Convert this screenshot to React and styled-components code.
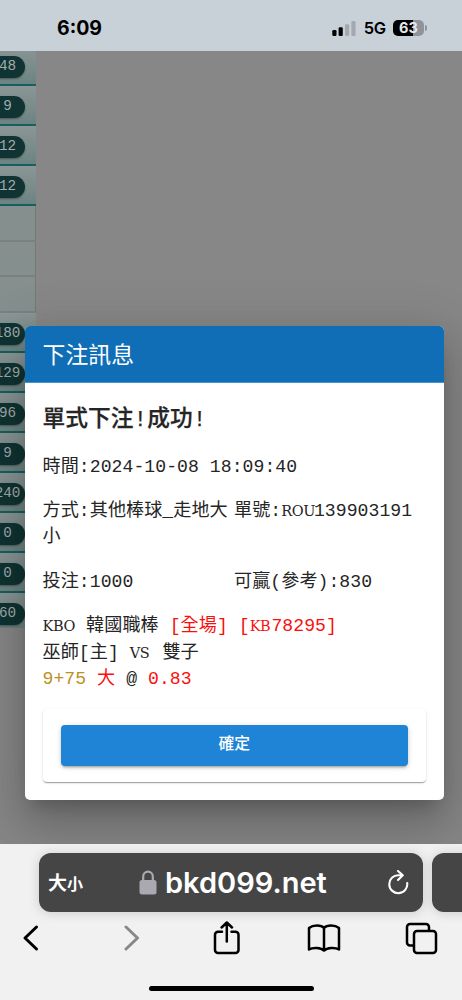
import styled, { createGlobalStyle } from "styled-components";

const GlobalStyle = createGlobalStyle`
  * {
    box-sizing: border-box;
  }
  body {
    margin: 0;
    background: #f1f1f1;
  }
`;

const mono = `"Liberation Mono", "Noto Sans CJK TC", monospace`;
const sans = `Inter, "Noto Sans CJK TC", sans-serif`;

const Phone = styled.div`
  display: flex;
  flex-direction: column;
  width: 462px;
  height: 1000px;
  overflow: hidden;
  font-family: ${mono};
`;

const StatusBar = styled.header`
  display: flex;
  align-items: center;
  justify-content: space-between;
  flex: none;
  height: 51px;
  padding: 5px 35px 0 57px;
  background: #c8d0d8;
  font-family: ${sans};
`;

const Clock = styled.span`
  font-size: 19.5px;
  font-weight: 700;
  line-height: 23px;
`;

const Indicators = styled.div`
  display: flex;
  align-items: center;
`;

const Network = styled.span`
  margin: 0 7px 0 8px;
  font-size: 16.5px;
  font-weight: 600;
  line-height: 20px;
  letter-spacing: -0.2px;
`;

const Battery = styled.div`
  width: 31px;
  height: 16px;
  border-radius: 5px;
  background: linear-gradient(90deg, #000 63%, #8f949b 63%);
  color: #e4e9ee;
  font-size: 14.5px;
  font-weight: 700;
  line-height: 16.5px;
  text-align: center;
`;

const BatteryTip = styled.span`
  width: 2px;
  height: 6px;
  margin-left: 1px;
  border-radius: 0 2px 2px 0;
  background: #8f949b;
`;

const Page = styled.main`
  position: relative;
  flex: none;
  height: 793px;
  overflow: hidden;
  background: #878787;
`;

const Sidebar = styled.div`
  width: 36px;
  margin-top: -5px;
  overflow: hidden;
`;

const MenuRow = styled.div`
  height: ${(props) => (props.$last ? 35 : 40)}px;
  padding-top: 10px;
  border-bottom: ${(props) => (props.$last ? 0 : 2)}px solid #15605f;
  background: linear-gradient(#8b9695, #6c8482);
`;

const Count = styled.div`
  width: 35px;
  height: 22px;
  margin-left: -10px;
  border-radius: 11px;
  background: #0f3433;
  box-shadow: 0 1px 2px rgba(0, 0, 0, 0.35);
  color: #a3abab;
  font-size: 14.3px;
  line-height: 20px;
  text-align: center;
`;

const EmptyCell = styled.div`
  width: 35.5px;
  height: ${(props) => props.$height}px;
  border-right: 1px solid #757a79;
  border-bottom: 2px solid #7b8180;
  background: #85908e;
`;

const Backdrop = styled.div`
  position: absolute;
  inset: 0;
  padding: 275px 18px 44px 24.5px;
`;

const Dialog = styled.section`
  display: flex;
  flex-direction: column;
  height: 474px;
  overflow: hidden;
  border-radius: 5px;
  background: #fff;
  color: #252525;
  box-shadow:
    0 12px 17px -8px rgba(0, 0, 0, 0.2),
    0 27px 43px 3px rgba(0, 0, 0, 0.14),
    0 10px 52px 9px rgba(0, 0, 0, 0.12);
`;

const DialogTitle = styled.h2`
  flex: none;
  height: 56.5px;
  margin: 0;
  padding: 3px 0 0 18px;
  border-bottom: 1px solid #4a92cb;
  background: #106eb7;
  color: #fff;
  font-size: 22.9px;
  font-weight: 400;
  line-height: 57px;
`;

const DialogBody = styled.div`
  display: flex;
  flex-direction: column;
  padding: 20px 18px 18px;
  font-size: 18.1px;
  line-height: 26.2px;
  letter-spacing: 0.06px;
`;

const Result = styled.h3`
  margin: 0 0 17px;
  font-size: 22.7px;
  font-weight: 500;
  line-height: 34px;
  -webkit-text-stroke: 0.25px currentColor;
`;

const Details = styled.div`
  display: grid;
  grid-template-columns: 191.5px 1fr;
  row-gap: 18.5px;
  white-space: nowrap;
`;

const Cell = styled.div`
  grid-column: ${(props) => (props.$wide ? "1 / -1" : "auto")};
`;

const Bet = styled.div`
  margin-top: 18px;
  white-space: nowrap;
`;

/* capital letters with slabs, set on the monospace grid */
const Caps = styled.span`
  display: inline-block;
  width: ${(props) => props.children.length * 10.9}px;
  font-family: "DejaVu Serif", serif;
  font-size: 14.5px;
  line-height: 1;
  letter-spacing: -0.4px;
`;

const Red = styled.span`
  color: #fa0f0c;
`;

const Gold = styled.span`
  color: #bd901c;
`;

const Actions = styled.div`
  margin-top: 17px;
  height: 73px;
  padding: 16px 18px;
  border-radius: 4px;
  box-shadow:
    0 2px 1px -1px rgba(0, 0, 0, 0.2),
    0 1px 1px rgba(0, 0, 0, 0.14),
    0 1px 3px rgba(0, 0, 0, 0.12);
`;

const ConfirmButton = styled.button`
  width: 100%;
  height: 41px;
  padding: 0 0 5px;
  border: 0;
  border-radius: 4px;
  background: #2084d6;
  color: #fff;
  font-family: "Noto Sans CJK TC", sans-serif;
  font-size: 15.8px;
  font-weight: 500;
  box-shadow:
    0 3px 2px -2px rgba(0, 0, 0, 0.2),
    0 2px 3px rgba(0, 0, 0, 0.14),
    0 1px 6px rgba(0, 0, 0, 0.12);
`;

const Browser = styled.footer`
  display: flex;
  flex-direction: column;
  flex: 1;
  padding-top: 9px;
  background: #f1f1f1;
  font-family: ${sans};
`;

const Tabs = styled.div`
  display: flex;
  gap: 9px;
  padding-left: 39px;
`;

const AddressBar = styled.div`
  display: flex;
  align-items: center;
  flex: none;
  width: 384px;
  height: 59px;
  padding: 0 14px 0 9px;
  border-radius: 12px;
  background: #454545;
  color: #fff;
  box-shadow: 0 1px 12px rgba(0, 0, 0, 0.16);
`;

const TextSize = styled.div`
  width: 91px;
  padding-top: 2px;
  font-size: 19px;
  font-weight: 700;
  line-height: 28px;
  small {
    font-size: 16px;
  }
`;

const Url = styled.span`
  flex: 1;
  margin-left: 8px;
  padding-top: 1px;
  font-size: 29px;
  font-weight: 600;
  line-height: 36px;
`;

const Toolbar = styled.nav`
  display: flex;
  justify-content: space-between;
  align-items: center;
  height: 50px;
  margin-top: 1px;
  padding: 0 21px 0 11px;
`;

const ToolButton = styled.div`
  display: flex;
  justify-content: center;
  width: 40px;
`;

const Icon = styled.svg`
  display: block;
  flex: none;
  fill: none;
  stroke: ${(props) => props.$color || "#000"};
  stroke-width: ${(props) => props.$stroke || 2.5};
  stroke-linecap: round;
  stroke-linejoin: round;
`;

const HomeIndicator = styled.div`
  width: 165px;
  height: 5px;
  margin: 23px auto 0;
  border-radius: 3px;
  background: #000;
`;

const Signal = () => (
  <svg width="24" height="15" viewBox="0 0 24 15">
    <rect x="0.3" y="9" width="4.2" height="6" rx="1.2" />
    <rect x="6.6" y="6.3" width="4.2" height="8.7" rx="1.2" />
    <rect x="13" y="3.2" width="4.2" height="11.8" rx="1.2" fill="#a3a9b0" />
    <rect x="19.4" y="0" width="4.2" height="15" rx="1.2" fill="#a3a9b0" />
  </svg>
);

const Lock = () => (
  <svg width="18" height="25" viewBox="0 0 18 25">
    <rect x="0.5" y="10" width="17" height="14.5" rx="2.5" fill="#aaa9b1" />
    <path
      d="M4.2 11V6.5a4.8 4.8 0 0 1 9.6 0V11"
      fill="none"
      stroke="#aaa9b1"
      strokeWidth="2.2"
    />
  </svg>
);

const topCounts = [48, 9, 12, 12];
const bottomCounts = [180, 129, 96, 9, 240, 0, 0, 60];

function App() {
  return (
    <Phone>
      <GlobalStyle />
      <StatusBar>
        <Clock>6:09</Clock>
        <Indicators>
          <Signal />
          <Network>5G</Network>
          <Battery>63</Battery>
          <BatteryTip />
        </Indicators>
      </StatusBar>

      <Page>
        <Sidebar>
          {topCounts.map((count, i) => (
            <MenuRow key={i}>
              <Count>{count}</Count>
            </MenuRow>
          ))}
          <EmptyCell $height={36} />
          <EmptyCell $height={35} />
          <EmptyCell $height={36} />
          {bottomCounts.map((count, i) => (
            <MenuRow key={i} $last={i === bottomCounts.length - 1}>
              <Count>{count}</Count>
            </MenuRow>
          ))}
        </Sidebar>

        <Backdrop>
          <Dialog role="dialog">
            <DialogTitle>下注訊息</DialogTitle>
            <DialogBody>
              <Result>單式下注!成功!</Result>
              <Details>
                <Cell $wide>時間:2024-10-08 18:09:40</Cell>
                <Cell>
                  方式:其他棒球_走地大
                  <br />小
                </Cell>
                <Cell>
                  單號:<Caps>ROU</Caps>139903191
                </Cell>
                <Cell>投注:1000</Cell>
                <Cell>可贏(參考):830</Cell>
              </Details>
              <Bet>
                <div>
                  <Caps>KBO</Caps> 韓國職棒{" "}
                  <Red>
                    [全場] [<Caps>KB</Caps>78295]
                  </Red>
                </div>
                <div>
                  巫師[主] <Caps>VS</Caps> 雙子
                </div>
                <div>
                  <Gold>9+75</Gold> <Red>大</Red> @ <Red>0.83</Red>
                </div>
              </Bet>
              <Actions>
                <ConfirmButton>確定</ConfirmButton>
              </Actions>
            </DialogBody>
          </Dialog>
        </Backdrop>
      </Page>

      <Browser>
        <Tabs>
          <AddressBar>
            <TextSize>
              大<small>小</small>
            </TextSize>
            <Lock />
            <Url>bkd099.net</Url>
            <Icon width="22" height="26" $color="#fff" $stroke={2.1}>
              <path d="M15.500 5.200H11.500A9 9 0 1 0 20.200 13M11 1l4.800 4.200-4.800 4.900" />
            </Icon>
          </AddressBar>
          <AddressBar />
        </Tabs>
        <Toolbar>
          <ToolButton>
            <Icon width="20" height="28" $stroke={3}>
              <path d="M15.500 3L4 14l11.500 11" />
            </Icon>
          </ToolButton>
          <ToolButton>
            <Icon width="20" height="28" $color="#888" $stroke={3}>
              <path d="M7 3l11.500 11L7 25" />
            </Icon>
          </ToolButton>
          <ToolButton>
            <Icon width="28" height="34">
              <path d="M10 10.800H6a3 3 0 0 0-3 3V29a3 3 0 0 0 3 3h17.500a3 3 0 0 0 3-3V13.800a3 3 0 0 0-3-3h-4M14.800 20.500V1.500M9.600 6.500l5.200-5 5.200 5" />
            </Icon>
          </ToolButton>
          <ToolButton>
            <Icon width="34" height="28">
              <path d="M17 26.500C14 23.500 6 23 2 25.500V4C6 .8 14 .8 17 4c3-3.200 11-3.200 15 0v21.500C28 23 20 23.500 17 26.500zM17 4v22" />
            </Icon>
          </ToolButton>
          <ToolButton>
            <Icon width="33" height="33">
              <path d="M8.500 23.500H5a3 3 0 0 1-3-3V5a3 3 0 0 1 3-3h16a3 3 0 0 1 3 3v3.500M12 9h16a3 3 0 0 1 3 3V28a3 3 0 0 1-3 3H12a3 3 0 0 1-3-3V12a3 3 0 0 1 3-3z" />
            </Icon>
          </ToolButton>
        </Toolbar>
        <HomeIndicator />
      </Browser>
    </Phone>
  );
}

export default App;
